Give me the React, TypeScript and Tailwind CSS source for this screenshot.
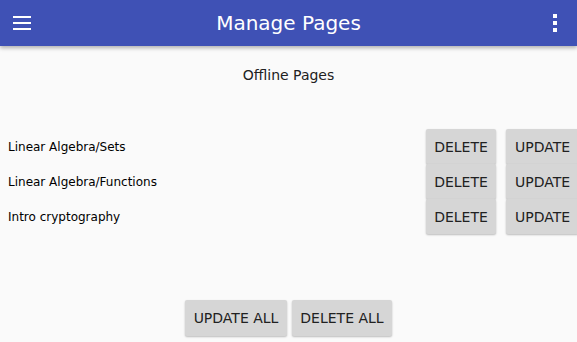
import React from 'react';

const pages = ['Linear Algebra/Sets', 'Linear Algebra/Functions', 'Intro cryptography'];

const font = { fontFamily: '"DejaVu Sans", sans-serif' };

const RaisedButton = ({ label, className = '' }: { label: string; className?: string }) => (
  <button
    className={`flex h-full items-center justify-center rounded-[2px] bg-[#d6d6d6] px-2 text-[14px] leading-none text-[#212121] shadow-[0_1px_2px_rgba(0,0,0,0.25)] ${className}`}
  >
    {label}
  </button>
);

export default function App() {
  return (
    <div className="relative h-[342px] w-[577px] overflow-hidden bg-[#fafafa]" style={font}>
      <header className="relative z-10 grid h-[46px] grid-cols-[1fr_auto_1fr] items-center bg-[#3f51b5] px-[13px] shadow-[0_2px_4px_rgba(0,0,0,0.3)]">
        <svg width="18" height="14" viewBox="0 0 18 14" className="fill-white">
          <rect x="0" y="0" width="18" height="2" />
          <rect x="0" y="6" width="18" height="2" />
          <rect x="0" y="12" width="18" height="2" />
        </svg>
        <h1 className="text-[20px] leading-none text-white">Manage Pages</h1>
        <svg width="4" height="18" viewBox="0 0 4 18" className="mr-[7px] justify-self-end fill-white">
          <rect x="0" y="0" width="4" height="4" />
          <rect x="0" y="7" width="4" height="4" />
          <rect x="0" y="14" width="4" height="4" />
        </svg>
      </header>

      <div className="pt-[19px] text-center text-[14px] leading-5 text-[#212121]">Offline Pages</div>

      <div className="mt-[44px] w-[579px]">
        {pages.map(name => (
          <div key={name} className="flex h-[35px] items-center">
            <span className="flex-1 pl-2 text-[12px] text-black">{name}</span>
            <div className="flex h-full gap-[10px]">
              <RaisedButton label="DELETE" className="w-[70px]" />
              <RaisedButton label="UPDATE" className="w-[73px]" />
            </div>
          </div>
        ))}
      </div>

      <div className="mt-[66px] flex h-[36px] justify-center gap-[5px]">
        <RaisedButton label="UPDATE ALL" className="w-[102px]" />
        <RaisedButton label="DELETE ALL" className="w-[100px]" />
      </div>
    </div>
  );
}
